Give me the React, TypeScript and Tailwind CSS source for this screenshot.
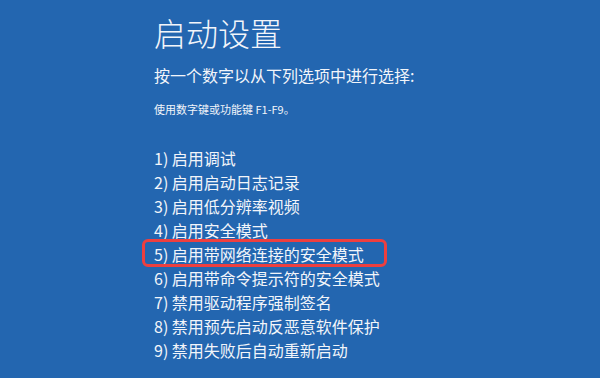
const options = [
  "1) 启用调试",
  "2) 启用启动日志记录",
  "3) 启用低分辨率视频",
  "4) 启用安全模式",
  "5) 启用带网络连接的安全模式",
  "6) 启用带命令提示符的安全模式",
  "7) 禁用驱动程序强制签名",
  "8) 禁用预先启动反恶意软件保护",
  "9) 禁用失败后自动重新启动",
];

export default function App() {
  return (
    <div
      className="h-[378px] w-[600px] overflow-hidden bg-[#2366b0] pl-[154px] pt-[12px] text-[#f2f5fa]"
      style={{ fontFamily: '"Noto Sans CJK SC", "Noto Sans", sans-serif' }}
    >
      <h1 className="text-[32px] font-light leading-[40px]">启动设置</h1>
      <p className="mt-[11px] text-[16px] leading-[24px]">按一个数字以从下列选项中进行选择:</p>
      <p className="mt-[14px] text-[11px] leading-[16px]">使用数字键或功能键 F1-F9。</p>
      <ul className="mt-[29px]">
        {options.map((o, i) => (
          <li key={o} className="relative text-[16px] leading-[24px]">
            {o}
            {i === 4 && (
              <span className="absolute -left-[12px] -top-[3px] h-[28px] w-[245px] rounded-[6px] border-[3px] border-[#ee3f3f]" />
            )}
          </li>
        ))}
      </ul>
    </div>
  );
}
